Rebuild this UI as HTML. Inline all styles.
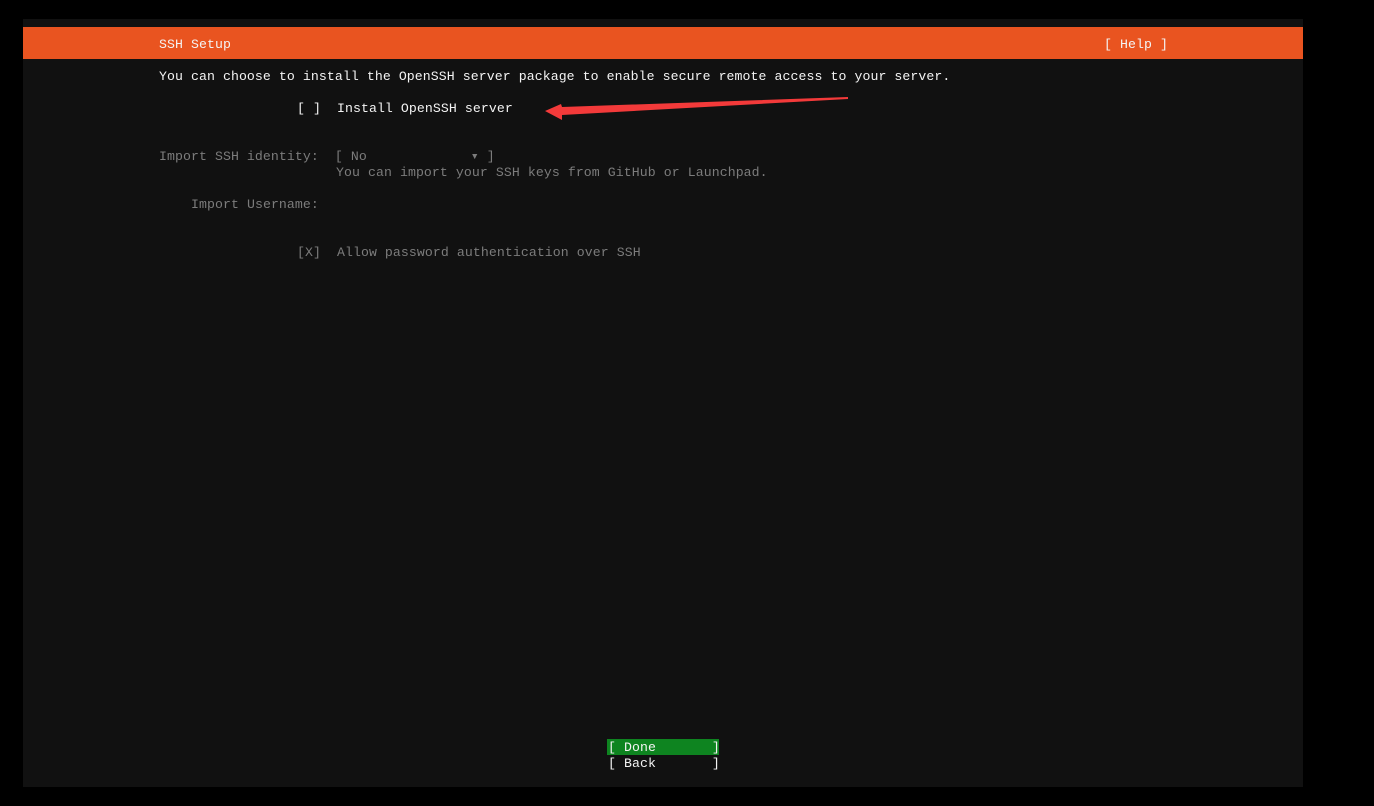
<!DOCTYPE html>
<html><head><meta charset="utf-8"><style>
body{margin:0;width:1374px;height:806px;background:#000;overflow:hidden;position:relative;font-family:"Liberation Mono",monospace;font-size:13.2px;letter-spacing:0.08px;}
.scr{position:absolute;left:23px;top:19px;width:1280px;height:768px;background:#111;}
.bar{position:absolute;left:23px;top:27px;width:1280px;height:32px;background:#E95420;}
.t{position:absolute;white-space:pre;line-height:16px;color:#f4f4f4;}
.g{color:#7c7c7c;}
</style></head><body>
<div class="scr"></div>
<div class="bar"></div>
<div class="t" style="left:159px;top:37px">SSH Setup</div>
<div class="t" style="left:1104px;top:37px">[ Help ]</div>
<div class="t" style="left:159px;top:69px">You can choose to install the OpenSSH server package to enable secure remote access to your server.</div>
<div class="t" style="left:297px;top:101px">[ ]  Install OpenSSH server</div>
<div class="t g" style="left:159px;top:149px">Import SSH identity:  [ No             ▾ ]</div>
<div class="t g" style="left:336px;top:165px">You can import your SSH keys from GitHub or Launchpad.</div>
<div class="t g" style="left:191px;top:197px">Import Username:</div>
<div class="t g" style="left:297px;top:245px">[X]  Allow password authentication over SSH</div>
<div style="position:absolute;left:607px;top:739px;width:112px;height:16px;background:#0E8420"></div>
<div class="t" style="left:608px;top:740px">[ Done       ]</div>
<div class="t" style="left:608px;top:756px">[ Back       ]</div>
<svg style="position:absolute;left:0;top:0" width="1374" height="806">
<polygon points="848,97 562,107 561,104 545,111 562,120 562,115 848,99" fill="#f33a3a"/>
</svg>
</body></html>
